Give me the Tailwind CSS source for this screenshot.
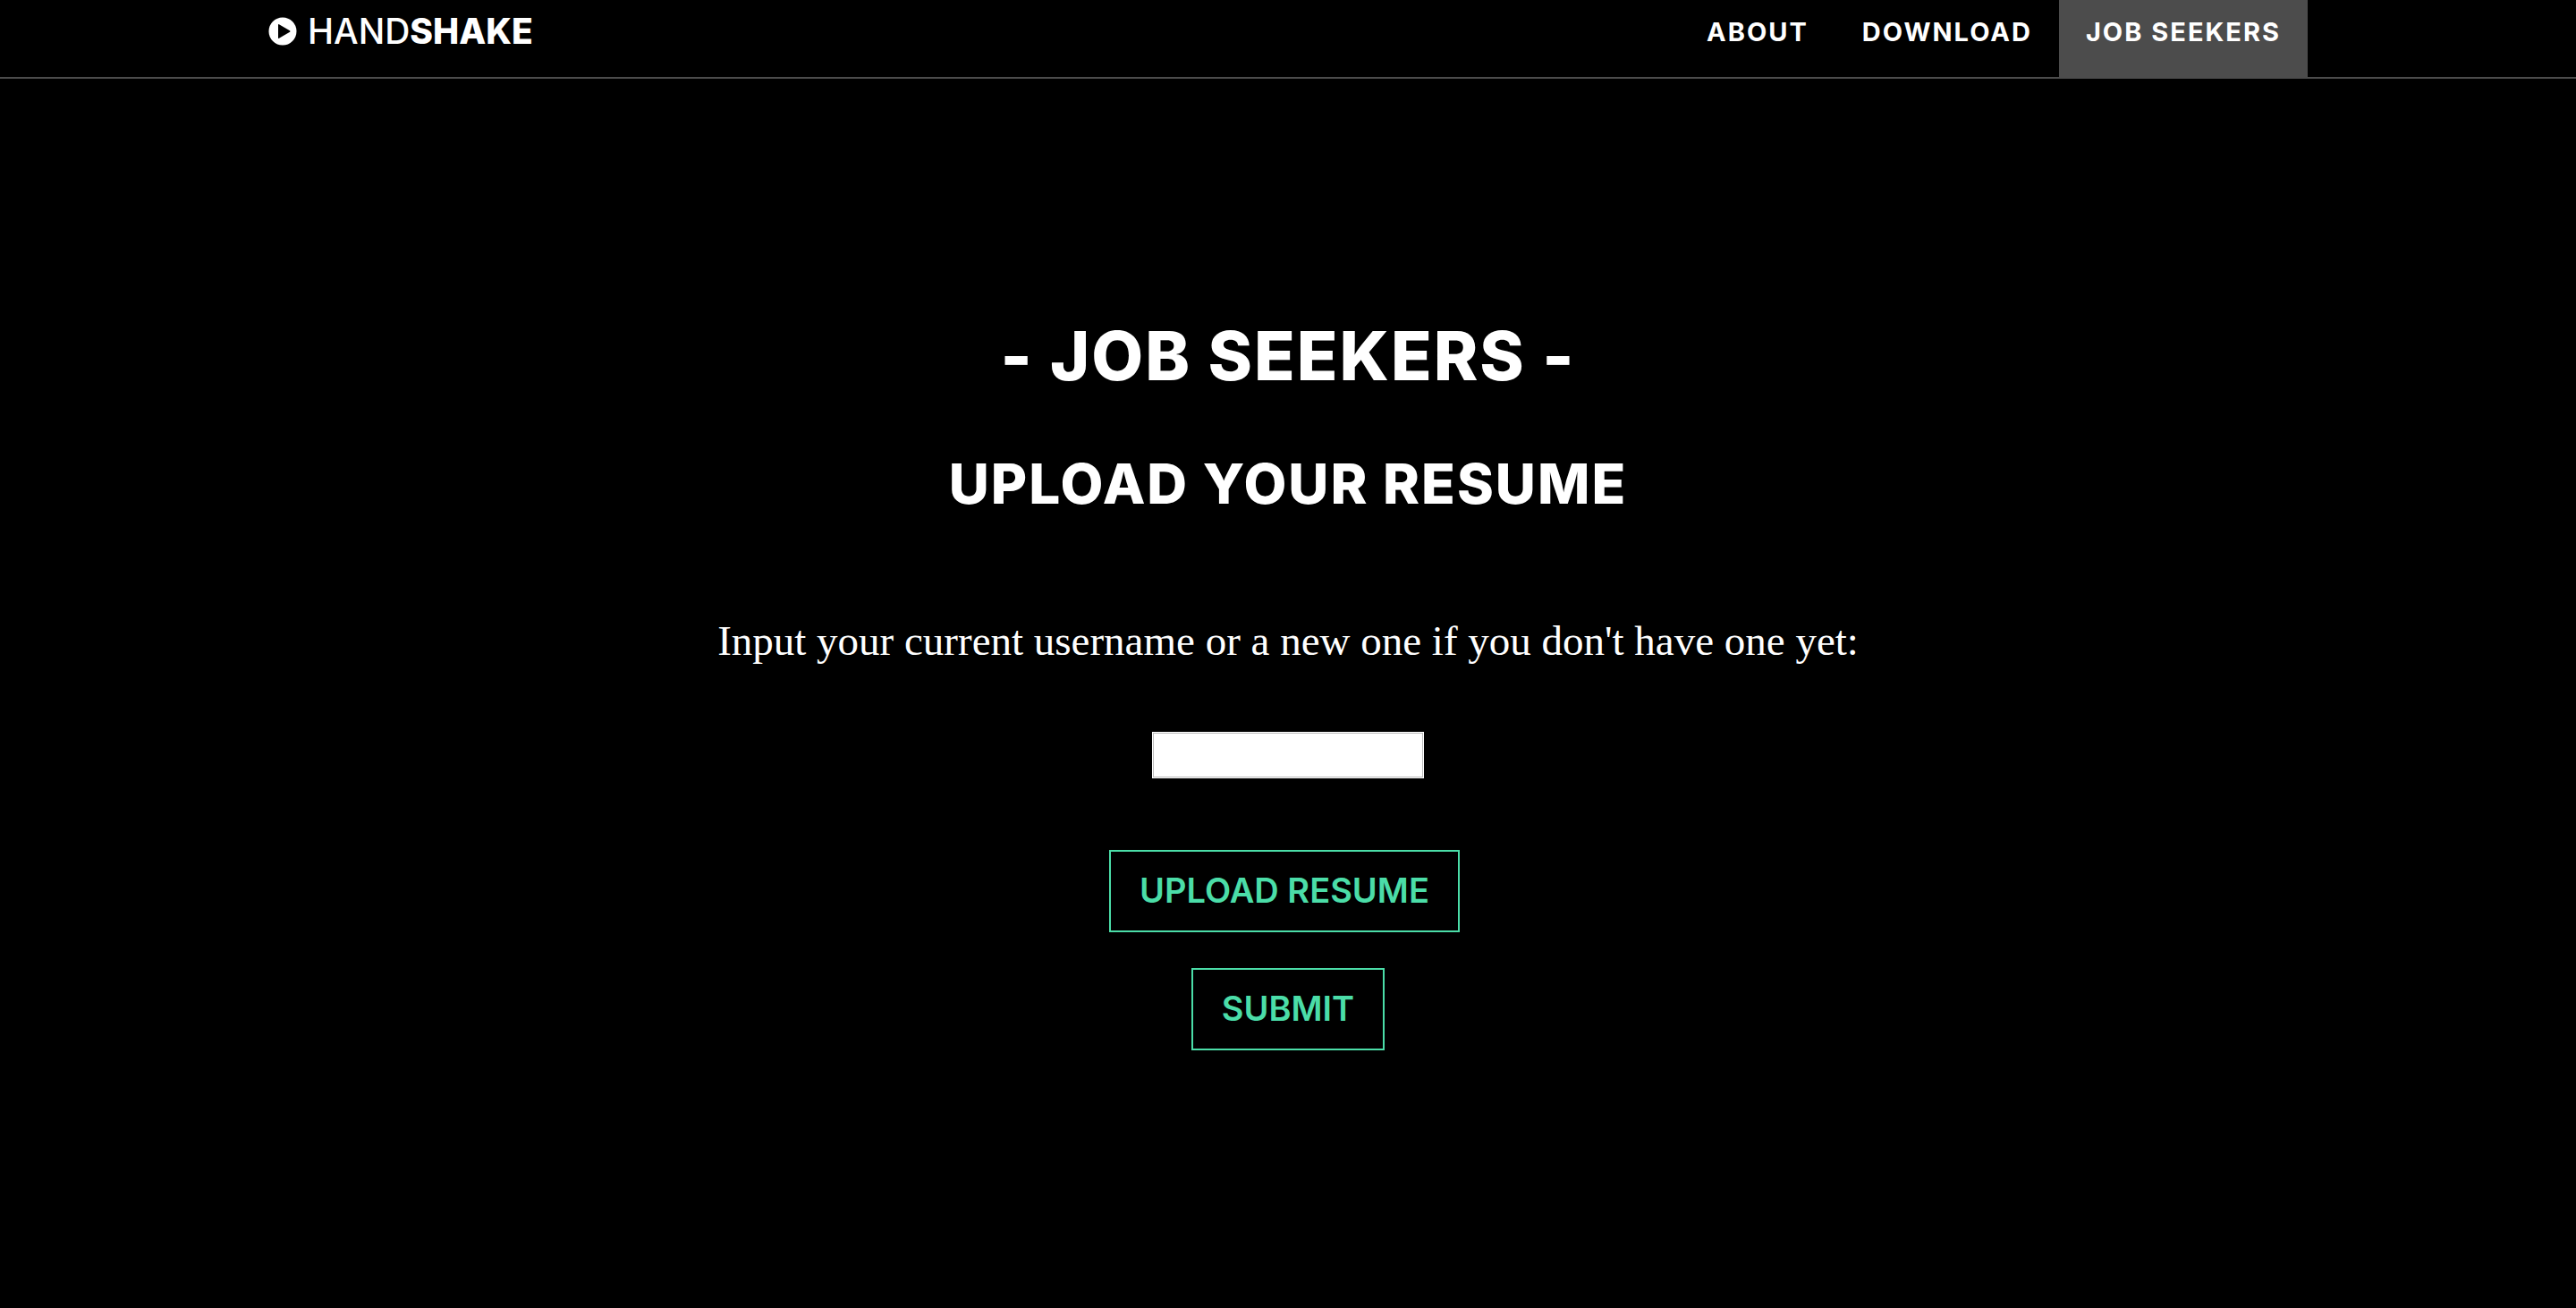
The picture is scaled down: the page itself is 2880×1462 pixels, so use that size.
<!DOCTYPE html>
<html lang="en">
<head>
  <meta charset="UTF-8" />
  <meta name="viewport" content="width=device-width, initial-scale=1.0" />
  <title>Handshake - Job Seekers</title>
  <script src="https://cdn.jsdelivr.net/npm/@tailwindcss/browser@4"></script>
</head>
<body class="bg-black text-white min-h-screen font-['Inter',sans-serif]">

  <!-- Navbar -->
  <nav class="w-full border-b-2 border-[#4c4c4c]">
    <div class="max-w-[2280px] mx-auto flex justify-between">
      <a href="#" class="flex items-center gap-3 pt-4 pb-8 text-[39px] leading-[38px] font-medium">
        <svg class="w-8 h-8" viewBox="0 0 32 32" aria-hidden="true">
          <circle cx="16" cy="16" r="15.5" fill="#fff" />
          <path d="M11 8.700v14.600q0 1 1 .5l12-7q1.200-.8 0-1.600l-12-7q-1-.5-1 .5z" fill="#000" />
        </svg>
        <span>HAND<b class="font-extrabold">SHAKE</b></span>
      </a>
      <ul class="flex text-[29px] leading-[40px] font-bold tracking-[2px]">
        <li><a href="#about" class="block px-[30px] pt-4 pb-[30px]">ABOUT</a></li>
        <li><a href="#download" class="block px-[30px] pt-4 pb-[30px]">DOWNLOAD</a></li>
        <li><a href="#seekers" class="block px-[30px] pt-4 pb-[30px] bg-[#4c4c4c]">JOB SEEKERS</a></li>
      </ul>
    </div>
  </nav>

  <!-- Job Seekers -->
  <main class="flex flex-col items-center text-center pt-[270px] pb-20">
    <h1 class="text-[75px] leading-[80px] font-extrabold tracking-[2px]">- JOB SEEKERS -</h1>
    <h2 class="mt-[70px] text-[62px] leading-[66px] font-extrabold tracking-[2px]">UPLOAD YOUR RESUME</h2>
    <form class="flex flex-col items-center mt-28" onsubmit="return false">
      <label for="username" class="text-[47px] leading-[60px] font-['Liberation_Serif',serif]">Input your current username or a new one if you don't have one yet:</label>
      <input type="text" id="username" class="mt-[72px] w-[304px] h-[52px] px-2 bg-white text-black text-[28px] border border-white inset-ring inset-ring-[#bbb]" />
      <button type="button" class="mt-20 mr-2 h-[92px] px-8 pb-[2px] border-2 border-[#4bdda8] text-[#4bdda8] text-[38px] leading-[52px] font-semibold">UPLOAD RESUME</button>
      <button type="submit" class="mt-10 h-[92px] px-8 pb-[2px] border-2 border-[#4bdda8] text-[#4bdda8] text-[38px] leading-[52px] font-semibold">SUBMIT</button>
    </form>
  </main>

</body>
</html>
